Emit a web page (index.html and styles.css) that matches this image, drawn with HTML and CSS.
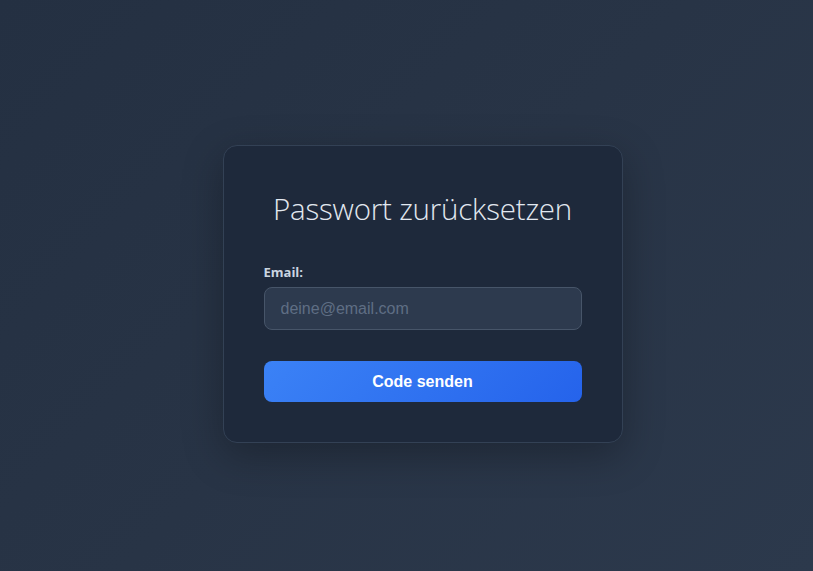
FILE: index.html
```
<!DOCTYPE html>
<html lang="de">
<head>
<meta charset="utf-8">
<title>Passwort zurücksetzen</title>
<link rel="stylesheet" href="styles.css">
</head>
<body>
<main class="page">
  <form class="card">
    <h2 class="title">Passwort zurücksetzen</h2>
    <label class="label" for="email">Email:</label>
    <input class="input" id="email" type="email" placeholder="deine@email.com">
    <button class="btn" type="button">Code senden</button>
  </form>
</main>
</body>
</html>
```
FILE: styles.css
```
* { box-sizing: border-box; }
html, body { margin: 0; height: 100%; }
body {
  background: linear-gradient(135deg, #243042 0%, #283446 50%, #2c394c 100%);
  font-family: "Open Sans", "Liberation Sans", sans-serif;
}
.page {
  min-height: 100vh;
  display: flex;
  align-items: center;
  justify-content: center;
  padding: 17px 0 0 32px;
}
.card {
  width: 400px;
  background: #1e293b;
  border: 1px solid #334155;
  border-radius: 14px;
  padding: 40px;
  box-shadow: 0 12px 40px rgba(0, 0, 0, 0.28);
  display: flex;
  flex-direction: column;
}
.title {
  margin: 0 0 31px;
  font-weight: 300;
  font-size: 29.5px;
  line-height: 46px;
  color: #e2e8f0;
  text-align: center;
  letter-spacing: -0.2px;
}
.label {
  font-size: 13px;
  font-weight: 700;
  color: #cbd5e1;
  line-height: 18px;
  margin-bottom: 6px;
}
.input {
  height: 43px;
  background: #2d3a4e;
  border: 1px solid #475569;
  border-radius: 8px;
  padding: 0 16px;
  font-family: "Liberation Sans", Arial, sans-serif;
  font-size: 16px;
  color: #e2e8f0;
  outline: none;
}
.input::placeholder { color: #5f6e84; }
.btn {
  margin-top: 31px;
  height: 41px;
  border: 0;
  border-radius: 8px;
  background: linear-gradient(135deg, #3b82f6 0%, #2563eb 100%);
  color: #ffffff;
  font-family: "Liberation Sans", Arial, sans-serif;
  font-weight: 700;
  font-size: 16px;
}
```
